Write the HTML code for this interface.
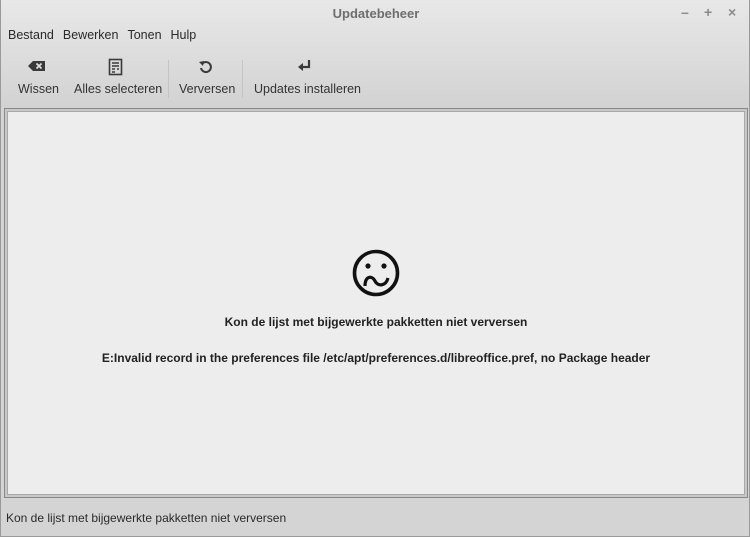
<!DOCTYPE html>
<html><head><meta charset="utf-8"><style>
*{margin:0;padding:0;box-sizing:border-box}
body{width:750px;height:537px;overflow:hidden;font-family:"Liberation Sans","DejaVu Sans",sans-serif;background:#d4d4d4;position:relative;color:#2a2a2a}
.win{position:absolute;left:0;top:0;width:750px;height:537px;border:1px solid #9a9a9a;border-top:none;background:linear-gradient(#e8e8e8 0,#dcdcdc 60px,#d2d2d2 108px,#d4d4d4 108px)}
.title{position:absolute;top:6px;left:0;width:750px;text-align:center;font-weight:bold;font-size:13px;color:#6e6e6e}
.ctl{position:absolute;top:4px;font-size:14px;color:#8a8a8a;font-weight:bold}
.menu{position:absolute;top:28px;left:7px;font-size:12.5px;color:#2a2a2a}
.menu span{margin-right:9px}
.tb{position:absolute;top:82px;font-size:12.5px;color:#333}
.ico{position:absolute}
.sep{position:absolute;top:60px;width:1px;height:38px;background:#c4c4c4}
.frame{position:absolute;left:3px;top:108px;width:744px;height:390px;border:1px solid #888;background:#c8c8c8;padding:2px}
.inner{width:100%;height:100%;background:#ededed;border:1px solid #a8a8a8}
.msg{position:absolute;left:0;width:750px;text-align:center;font-weight:bold;font-size:12px;color:#222}
.status{position:absolute;left:5px;top:511px;font-size:12px;color:#2a2a2a}
</style></head><body>
<div class="win">
<div class="title">Updatebeheer</div>
<div class="ctl" style="left:680px">–</div>
<div class="ctl" style="left:703px">+</div>
<div class="ctl" style="left:727px">×</div>
<div class="menu"><span>Bestand</span><span>Bewerken</span><span>Tonen</span><span>Hulp</span></div>

<svg class="ico" style="left:26px;top:59px" width="20" height="14" viewBox="0 0 20 14"><path d="M6 2H18V12H6L1 7Z" fill="#3a3a3a"/><path d="M9.5 4.5l5 5M14.5 4.5l-5 5" stroke="#e0e0e0" stroke-width="1.8"/></svg>
<div class="tb" style="left:17px">Wissen</div>
<svg class="ico" style="left:107px;top:58px" width="16" height="18" viewBox="0 0 16 18"><rect x="1.5" y="1.5" width="12" height="15" fill="none" stroke="#3a3a3a" stroke-width="1.6"/><path d="M4 5h7M4 8h7M4 11h3M9 11h2M4 14h3" stroke="#3a3a3a" stroke-width="1.4"/></svg>
<div class="tb" style="left:73px">Alles selecteren</div>
<div class="sep" style="left:167px"></div>
<svg class="ico" style="left:196px;top:59px" width="16" height="16" viewBox="0 0 16 16"><path d="M4 9A5 5 0 1 0 6 4" fill="none" stroke="#3a3a3a" stroke-width="2"/><path d="M2 3L7 2L6 7Z" fill="#3a3a3a"/></svg>
<div class="tb" style="left:178px">Verversen</div>
<div class="sep" style="left:241px"></div>
<svg class="ico" style="left:296px;top:59px" width="16" height="14" viewBox="0 0 16 14"><path d="M12 1V8H5" fill="none" stroke="#3a3a3a" stroke-width="2.2"/><path d="M1 8L6 4V12Z" fill="#3a3a3a"/></svg>
<div class="tb" style="left:253px">Updates installeren</div>

<div class="frame"><div class="inner"></div></div>
<svg class="ico" style="left:350px;top:248px" width="50" height="50" viewBox="0 0 50 50"><circle cx="25" cy="25" r="21.5" fill="none" stroke="#111" stroke-width="3.6"/><circle cx="17" cy="18" r="2.6" fill="#111"/><circle cx="33" cy="18" r="2.6" fill="#111"/><path d="M14 38C14 28 21 27 24 33C27 39 35 38 37 30" fill="none" stroke="#111" stroke-width="3.2"/></svg>
<div class="msg" style="top:315px">Kon de lijst met bijgewerkte pakketten niet verversen</div>
<div class="msg" style="top:351px">E:Invalid record in the preferences file /etc/apt/preferences.d/libreoffice.pref, no Package header</div>
<div class="status">Kon de lijst met bijgewerkte pakketten niet verversen</div>
</div>
</body></html>
